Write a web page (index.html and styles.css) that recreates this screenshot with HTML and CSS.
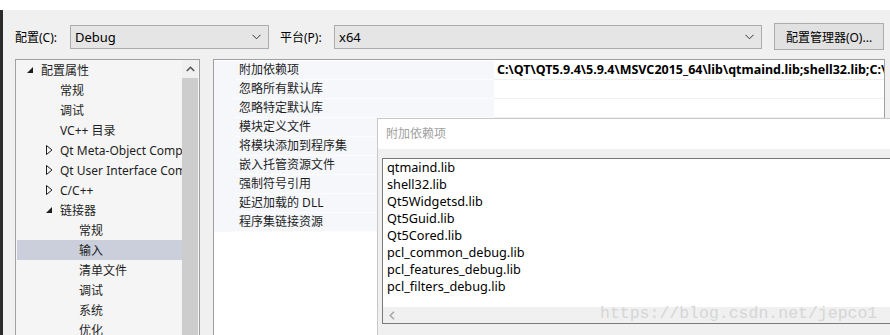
FILE: index.html
```html
<!DOCTYPE html>
<html lang="zh-CN">
<head>
    <meta charset="UTF-8">
    <title>属性页</title>
    <link rel="stylesheet" href="styles.css">
</head>
<body>

    <div class="titlebar"></div>

    <div class="window">
        <div class="toolbar">
            <span class="label label-config">配置(C):</span>
            <div class="combo combo-config">
                <span>Debug</span>
                <svg class="chevron" width="9" height="6" viewBox="0 0 9 6"><path d="M0.5 0.8 L4.5 4.8 L8.5 0.8" fill="none" stroke="#333" stroke-width="1"/></svg>
            </div>
            <span class="label label-platform">平台(P):</span>
            <div class="combo combo-platform">
                <span>x64</span>
                <svg class="chevron" width="9" height="6" viewBox="0 0 9 6"><path d="M0.5 0.8 L4.5 4.8 L8.5 0.8" fill="none" stroke="#333" stroke-width="1"/></svg>
            </div>
            <button class="btn">配置管理器(O)...</button>
        </div>

        <div class="panes">
            <div class="tree">
                <ul class="tree-list">
                    <li class="node lvl0"><span class="arrow"><svg width="6" height="6" viewBox="0 0 6 6"><path d="M6 0 L6 6 L0 6 Z" fill="#1e1e1e"/></svg></span>配置属性</li>
                    <li class="node lvl1"><span class="arrow"></span>常规</li>
                    <li class="node lvl1"><span class="arrow"></span>调试</li>
                    <li class="node lvl1"><span class="arrow"></span>VC++ 目录</li>
                    <li class="node lvl1"><span class="arrow"><svg width="7" height="10" viewBox="0 0 7 10"><path d="M0.5 0.5 L6 5 L0.5 9.5 Z" fill="none" stroke="#1e1e1e" stroke-width="1"/></svg></span>Qt Meta-Object Compiler</li>
                    <li class="node lvl1"><span class="arrow"><svg width="7" height="10" viewBox="0 0 7 10"><path d="M0.5 0.5 L6 5 L0.5 9.5 Z" fill="none" stroke="#1e1e1e" stroke-width="1"/></svg></span>Qt User Interface Compiler</li>
                    <li class="node lvl1"><span class="arrow"><svg width="7" height="10" viewBox="0 0 7 10"><path d="M0.5 0.5 L6 5 L0.5 9.5 Z" fill="none" stroke="#1e1e1e" stroke-width="1"/></svg></span>C/C++</li>
                    <li class="node lvl1"><span class="arrow"><svg width="6" height="6" viewBox="0 0 6 6"><path d="M6 0 L6 6 L0 6 Z" fill="#1e1e1e"/></svg></span>链接器</li>
                    <li class="node lvl2"><span class="arrow"></span>常规</li>
                    <li class="node lvl2 selected"><span class="arrow"></span>输入</li>
                    <li class="node lvl2"><span class="arrow"></span>清单文件</li>
                    <li class="node lvl2"><span class="arrow"></span>调试</li>
                    <li class="node lvl2"><span class="arrow"></span>系统</li>
                    <li class="node lvl2"><span class="arrow"></span>优化</li>
                </ul>
                <div class="vscroll">
                    <div class="vscroll-up"><svg width="9" height="6" viewBox="0 0 9 6"><path d="M0.8 5 L4.5 1.3 L8.2 5" fill="none" stroke="#555" stroke-width="1.6"/></svg></div>
                    <div class="vscroll-thumb"></div>
                </div>
            </div>

            <div class="grid">
                <div class="grid-row">
                    <span class="grid-margin"></span>
                    <span class="grid-name">附加依赖项</span>
                    <span class="grid-value bold">C:\QT\QT5.9.4\5.9.4\MSVC2015_64\lib\qtmaind.lib;shell32.lib;C:\QT\QT5.9.4</span>
                </div>
                <div class="grid-row"><span class="grid-margin"></span><span class="grid-name">忽略所有默认库</span><span class="grid-value"></span></div>
                <div class="grid-row"><span class="grid-margin"></span><span class="grid-name">忽略特定默认库</span><span class="grid-value"></span></div>
                <div class="grid-row"><span class="grid-margin"></span><span class="grid-name">模块定义文件</span><span class="grid-value"></span></div>
                <div class="grid-row"><span class="grid-margin"></span><span class="grid-name">将模块添加到程序集</span><span class="grid-value"></span></div>
                <div class="grid-row"><span class="grid-margin"></span><span class="grid-name">嵌入托管资源文件</span><span class="grid-value"></span></div>
                <div class="grid-row"><span class="grid-margin"></span><span class="grid-name">强制符号引用</span><span class="grid-value"></span></div>
                <div class="grid-row"><span class="grid-margin"></span><span class="grid-name">延迟加载的 DLL</span><span class="grid-value"></span></div>
                <div class="grid-row"><span class="grid-margin"></span><span class="grid-name">程序集链接资源</span><span class="grid-value"></span></div>
            </div>
        </div>

        <!-- popup editor over the property grid -->
        <div class="popup">
            <div class="popup-title">附加依赖项</div>
            <div class="textbox">
                <div class="textbox-lines">
                    <div>qtmaind.lib</div>
                    <div>shell32.lib</div>
                    <div>Qt5Widgetsd.lib</div>
                    <div>Qt5Guid.lib</div>
                    <div>Qt5Cored.lib</div>
                    <div>pcl_common_debug.lib</div>
                    <div>pcl_features_debug.lib</div>
                    <div>pcl_filters_debug.lib</div>
                </div>
                <div class="hscroll">
                    <svg class="hscroll-left" width="6" height="9" viewBox="0 0 6 9"><path d="M5 0.8 L1.3 4.5 L5 8.2" fill="none" stroke="#aaa" stroke-width="1.6"/></svg>
                    <span class="watermark">https://blog.csdn.net/jepco1</span>
                </div>
            </div>
        </div>
    </div>

</body>
</html>
```

FILE: styles.css
```css
body {
    margin: 0;
    width: 890px;
    height: 335px;
    overflow: hidden;
    font-family: 'Noto Sans', 'Noto Sans CJK SC', sans-serif;
    font-size: 12px;
    color: #1e1e1e;
    background: #f0f0f0;
}

.titlebar {
    height: 10px;
    background: white;
}

.window {
    position: relative;
    height: 325px;
    overflow: hidden;
    background: #f0f0f0;
    border-left: 3px solid #2b2b2b;
}

/* top row: configuration and platform */
.toolbar {
    display: flex;
    align-items: center;
    padding: 13px 0 0 12px;
    height: 27px;
}

.label {
    color: #000;
    white-space: nowrap;
}

.label-config {
    width: 55px;
}

.label-platform {
    width: 54px;
    margin-left: 11px;
}

.combo {
    display: flex;
    align-items: center;
    justify-content: space-between;
    height: 22px;
    padding: 0 7px 0 4px;
    background: #e5e5e5;
    border: 1px solid #acacac;
    color: #000;
    font-size: 13px;
}

.combo-config {
    width: 186px;
}

.combo-platform {
    width: 415px;
}

.btn {
    margin-left: 12px;
    width: 110px;
    height: 27px;
    padding: 0;
    background: #e1e1e1;
    border: 1px solid #adadad;
    font-family: inherit;
    font-size: 12px;
    color: #000;
}

/* tree + property grid */
.panes {
    display: flex;
    margin-top: 9px;
    padding-left: 12px;
    height: 290px;
}

.tree {
    display: flex;
    width: 183px;
    border: 1px solid #a0a0a0;
    background: #f5f5f5;
}

.tree-list {
    flex: 1;
    list-style: none;
    margin: 0;
    padding: 0 0 0 1px;
    overflow: hidden;
}

.node {
    display: flex;
    align-items: center;
    height: 20px;
    white-space: nowrap;
}

.node.lvl0 { padding-left: 10px; }
.node.lvl1 { padding-left: 29px; }
.node.lvl2 { padding-left: 48px; }

.node.selected {
    background: #cbcedb;
}

.arrow {
    display: flex;
    align-items: center;
    width: 14px;
    flex-shrink: 0;
}

.vscroll {
    width: 16px;
    margin-right: 1px;
    background: #f0f0f0;
    display: flex;
    flex-direction: column;
}

.vscroll-up {
    height: 18px;
    display: flex;
    align-items: center;
    justify-content: center;
}

.vscroll-thumb {
    flex: 1;
    background: #cdcdcd;
}

.grid {
    margin-left: 13px;
    width: 670px;
    padding-top: 1px;
    border: 1px solid #a0a0a0;
    background: white;
}

.grid-row {
    display: flex;
    height: 19px;
}

.grid-margin {
    width: 21px;
    background: #f5f7fb;
}

.grid-name {
    width: 255px;
    padding-left: 4px;
    line-height: 18px;
    background: #f5f7fb;
    border-bottom: 1px solid #fdfdfe;
    color: #1e1e1e;
}

.grid-value {
    flex: 1;
    padding-left: 3px;
    line-height: 18px;
    border-bottom: 1px solid #f0f0f0;
    white-space: nowrap;
    overflow: hidden;
    color: #000;
}

.grid-value.bold {
    font-weight: bold;
    font-size: 12.5px;
}

/* edit popup */
.popup {
    position: absolute;
    left: 374px;
    top: 108px;
    width: 520px;
    height: 230px;
    background: #f0f0f0;
    border-top: 1px solid #c8c8c8;
    border-left: 1px solid #c8c8c8;
}

.popup-title {
    height: 30px;
    line-height: 30px;
    padding-left: 8px;
    background: white;
    color: #a0a0a0;
}

.textbox {
    display: flex;
    flex-direction: column;
    margin: 9px 0 0 4px;
    height: 164px;
    background: white;
    border: 1px solid #7a7a7a;
}

.textbox-lines {
    flex: 1;
    padding-left: 4px;
    font-size: 12.7px;
    line-height: 17px;
    color: #000;
}

.hscroll {
    position: relative;
    height: 16px;
    background: #f0f0f0;
}

.hscroll-left {
    position: absolute;
    left: 6px;
    top: 4px;
}

.watermark {
    position: absolute;
    left: 217px;
    top: -3px;
    font-family: 'Liberation Mono', monospace;
    font-size: 16.5px;
    line-height: 20px;
    color: #d6d6d6;
    white-space: nowrap;
}
```
